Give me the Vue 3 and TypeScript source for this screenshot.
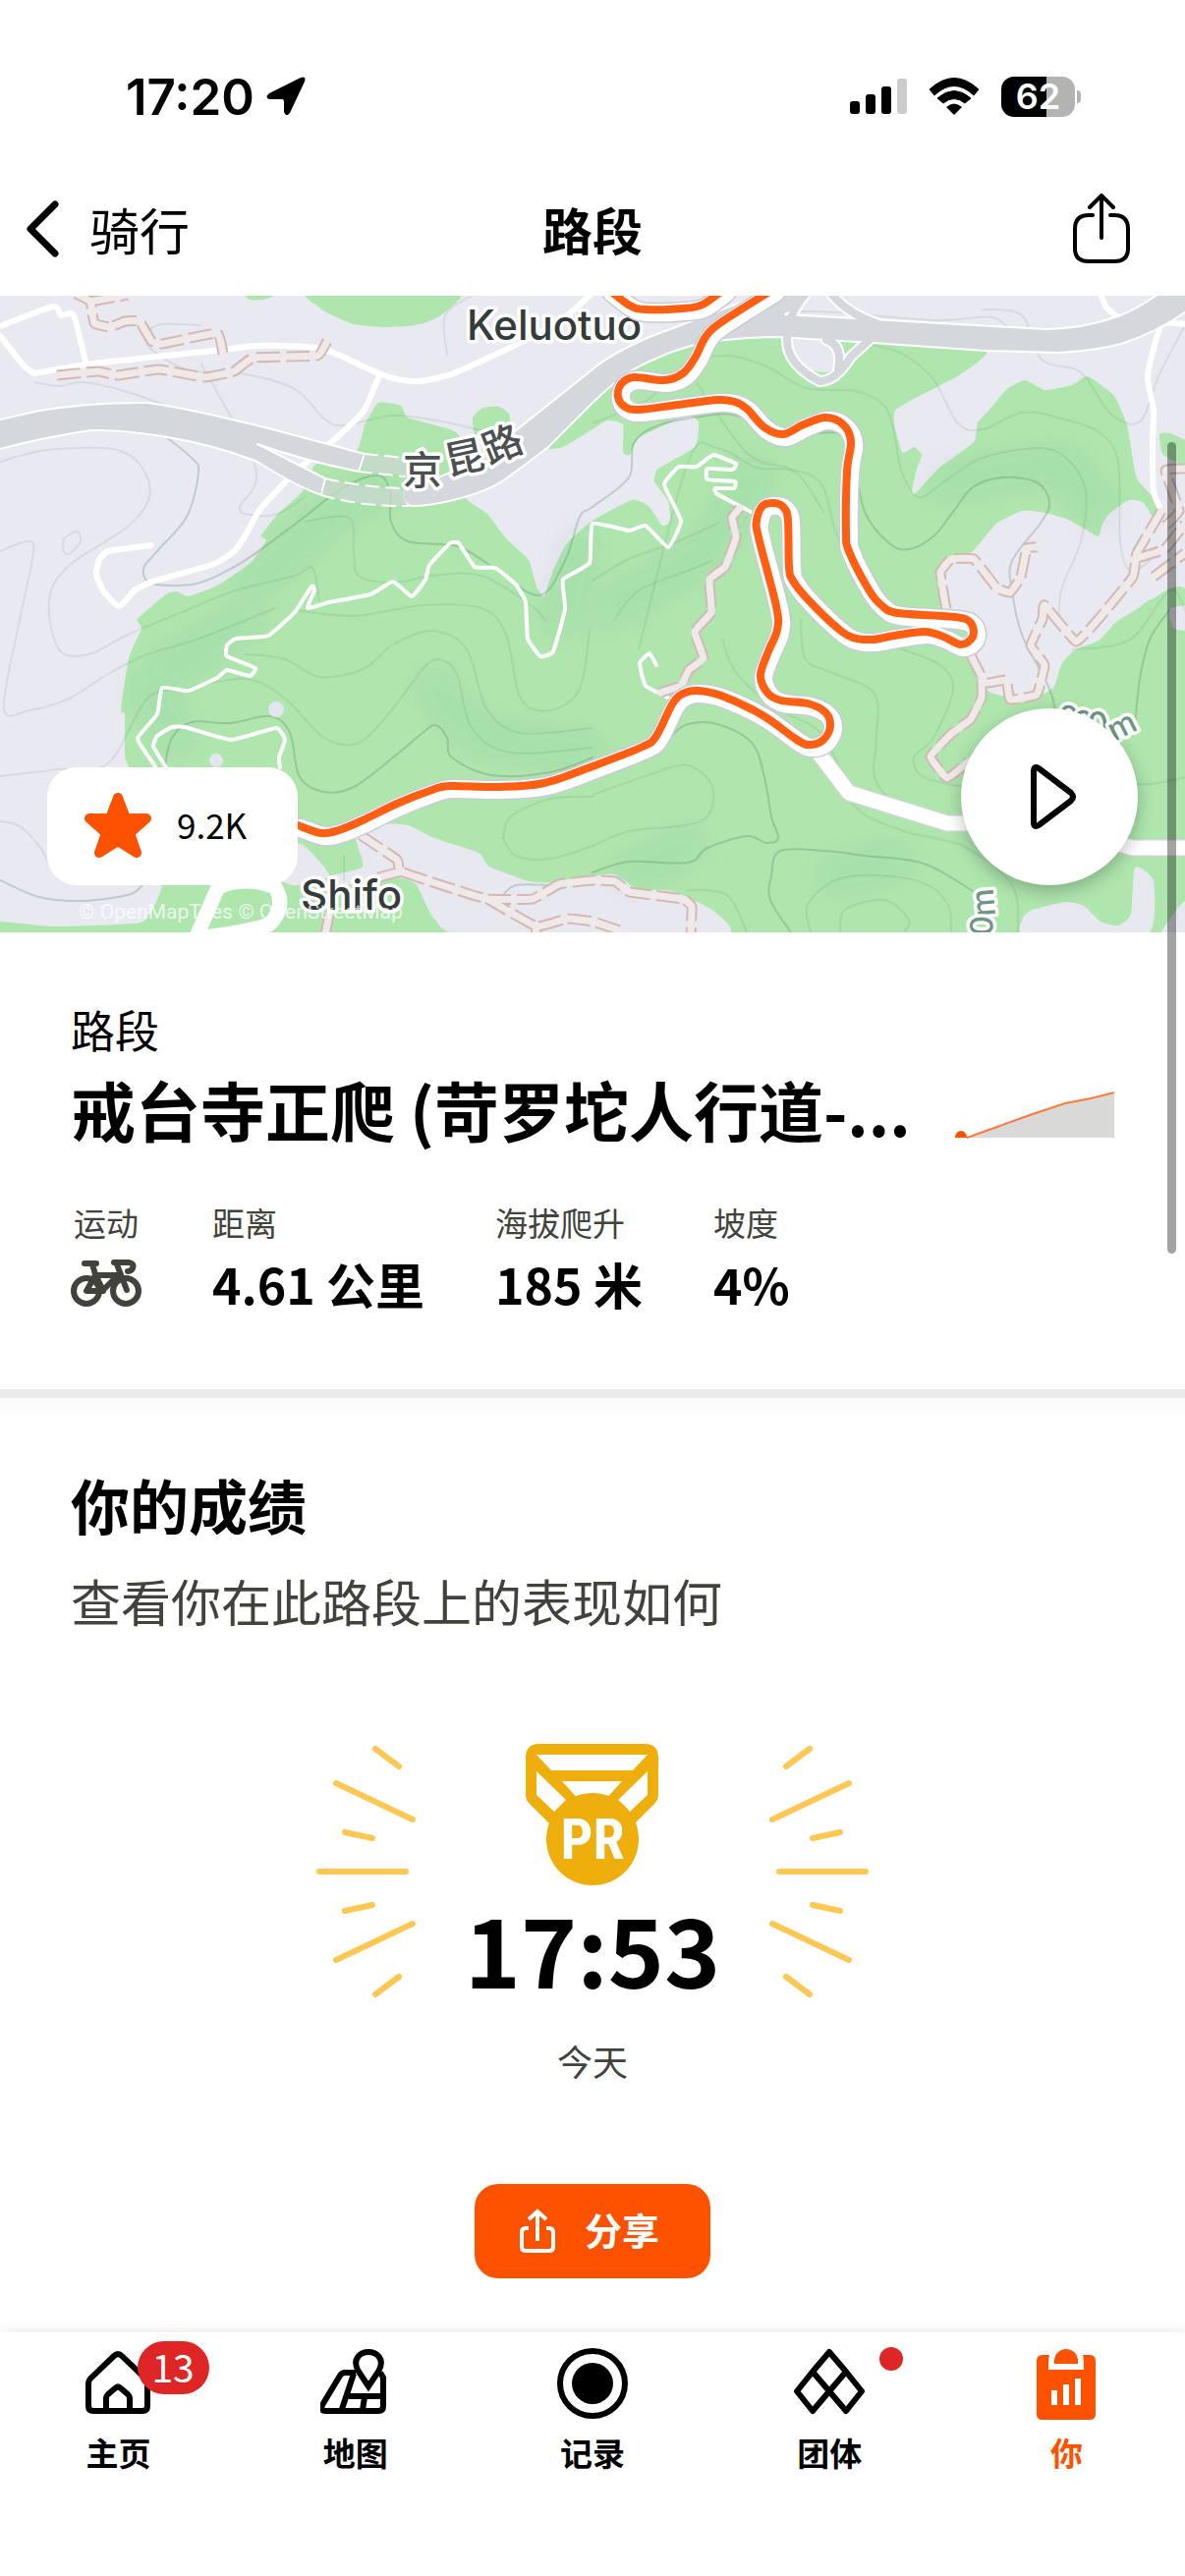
<script setup lang="ts">
type Point = [number, number]

function parse(points: string): Point[] {
  return points.split(' ').map((pair) => {
    const [x, y] = pair.split(',').map(Number)
    return [x, y] as Point
  })
}

/* Smooth curve through every point; tension 0 gives straight segments. */
function curve(points: string, closed = false, tension = 1): string {
  const p = parse(points)
  const n = p.length
  const at = (i: number): Point => (closed ? p[(i + n) % n] : p[Math.max(0, Math.min(n - 1, i))])
  let d = `M${p[0][0]} ${p[0][1]}`
  const last = closed ? n : n - 1
  for (let i = 0; i < last; i++) {
    const [a, b, c, e] = [at(i - 1), at(i), at(i + 1), at(i + 2)]
    const k = tension / 6
    d += `C${(b[0] + (c[0] - a[0]) * k).toFixed(1)} ${(b[1] + (c[1] - a[1]) * k).toFixed(1)} `
    d += `${(c[0] - (e[0] - b[0]) * k).toFixed(1)} ${(c[1] - (e[1] - b[1]) * k).toFixed(1)} ${c[0]} ${c[1]}`
  }
  return closed ? d + 'Z' : d
}

const forests: string[] = [
  '313,-4 325,12 338,20 360,29 388,32 415,31 431,28 450,19 467,-4',
  '250,-2 254,4 268,4 282,-2',
  '481,124 492,114 508,113 518,120 519,130 515,142 500,150 484,146',
  '140,329 169,304 180,301 192,306 223,294 256,271 271,249 266,244 283,222 308,199 321,172 363,157 371,132 385,109 408,112 415,124 458,136 469,146 460,186 477,209 496,222 515,247 538,269 546,296 554,306 562,282 577,252 603,229 643,208 661,215 674,234 682,229 680,209 666,189 670,176 707,154 711,129 699,122 651,144 641,162 634,159 634,131 618,127 603,136 573,154 558,154 603,109 641,77 672,62 722,47 791,42 888,46 1003,56 976,81 911,117 918,159 930,154 938,162 933,176 928,199 932,201 955,176 991,149 995,129 1007,116 1025,95 1043,86 1064,96 1091,91 1107,82 1134,102 1147,132 1157,186 1180,212 1176,229 1164,211 1149,208 1130,221 1122,232 1118,245 1107,239 1085,227 1064,221 1041,219 1014,232 989,261 964,269 955,289 963,319 990,340 1000,399 1045,412 1072,399 1080,376 1093,361 1118,351 1136,332 1157,319 1172,309 1210,309 1210,652 -4,652 -4,637 54,642 120,640 146,637 158,619 165,600 170,540 131,479 127,466 127,426 123,422 131,369 144,339',
  '1180,141 1191,140 1210,150 1210,174 1184,162'
]

const clearings: string[] = [
  '303,558 319,569 335,591 300,600 280,590',
  '362,549 388,538 415,539 442,552 487,567 498,581 538,596 565,597 603,591 626,589 649,604 684,606 726,626 734,652 477,652 442,634 423,599 400,592 350,600 335,591 369,581',
  '1040,636 1049,626 1084,617 1103,621 1120,637 1138,641 1151,629 1155,582 1174,596 1166,652 1045,652',
  '1180,652 1206,616 1212,652',
  '1190,319 1210,316 1210,340 1194,338',
  '805,46 822,43 841,45 851,56 851,72 842,78 826,76 812,66'
]

const contours: string[] = [
  '0,169 40,158 80,155 120,157 145,175 152,205 130,235 70,275 50,310 60,360 90,365 130,345 190,320 240,300 300,285 318,277 325,310',
  '0,260 28,250 34,262 20,330 4,420 30,422 70,410 110,385 150,365 200,350 280,318',
  '35,88 60,92 85,88 130,98 190,120',
  '205,30 160,30 150,50 190,75 250,80 300,95 330,125 350,132 400,122 450,128 515,142 550,135',
  '0,489 60,482 110,476 150,410 190,400 250,390 290,410 330,450 365,455 400,420 430,380 447,370 465,385 480,440 520,465 603,460',
  '205,70 260,175 244,215 255,223 283,222 310,205',
  '310,230 355,226 360,260 365,285 400,292 440,285 490,285 540,315 555,330',
  '300,320 360,326 430,315 490,318 515,345 530,410 560,422 590,400 600,340',
  '250,365 290,370 325,388 370,380 400,355 440,341 475,360 495,420 530,445 603,440',
  '0,535 20,540 40,560 60,590 100,595',
  '455,60 453,20 480,0',
  '603,130 660,105 700,70 740,61 780,72 820,94 870,97 900,112 910,140 918,180 935,205 960,190 1000,165 1060,155 1090,170 1105,200 1100,250 1080,300 1078,340',
  '710,90 760,160 800,175 835,190 850,240 860,260',
  '650,360 700,170 730,155 770,175 810,180 838,220',
  '888,50 920,60 950,85 975,130 1000,136 1040,119 1080,125 1120,140 1138,170 1140,250 1150,280 1170,270',
  '1000,14 1040,20 1060,65 1100,78 1130,120 1160,128 1180,80 1206,30',
  '770,20 830,16 950,25 1010,22 1030,40',
  '603,290 640,268 690,250 730,232',
  '625,330 650,300 700,280 724,270',
  '815,330 820,370 850,385 890,405 892,450 890,490 910,515 950,530',
  '735,350 750,385 790,420 830,440 850,470 870,520 920,545 980,560 1030,600 1036,648',
  '910,357 955,375 970,400 950,450 930,470 940,490 980,500',
  '1092,360 1150,350 1190,300 1206,320',
  '603,508 660,488 700,478 725,500 720,530 690,540 640,545 603,560',
  '512,552 520,530 560,512 603,510',
  '512,552 525,570 560,573 603,560',
  '825,648 822,620 850,595 890,590 940,598 965,620 968,648',
  '855,648 860,625 900,615 925,635 920,648',
  '1120,495 1170,497 1206,490',
  '700,605 740,610 760,648',
  '65,247 78,240 82,250 70,263 64,258 65,247',
  '350,570 350,595'
]

const indexContours: string[] = [
  '168,143 195,165 202,180 190,225 160,260 146,278 155,293 200,293 240,275 270,255 310,225 350,195 385,183 397,200 398,230 415,250 465,255 500,275 548,305 575,270 590,225 603,215 640,185 645,150 670,132 720,122 750,122 800,140 860,141 870,170 880,220 905,252 925,258 950,245 970,220 990,195 1020,185 1055,190 1068,210 1060,230 1030,270 1030,300 1040,345 1068,400 1075,430',
  '168,478 175,450 195,434 235,435 275,428 295,445 305,490 330,505 360,500 400,470 430,445 443,437 455,450 460,470 500,488 560,485 603,470',
  '683,448 700,436 730,436 765,455 778,490 785,530 792,552 780,557 760,550 720,562 700,577 640,576 603,587',
  '805,648 784,615 785,590 794,565 840,565 880,570 940,578 990,606',
  '1155,440 1160,390 1170,350 1190,320',
  '0,595 40,612 80,616 130,610 145,600',
  '510,612 525,600 560,600'
]

const streets: string[] = [
  '35,79 88,70 150,63 227,55 260,51 292,51 320,53 342,59 385,79 405,85 427,87 462,79 527,49 570,26 602,-2',
  '0,31 54,11 62,20 75,20 88,71',
  '0,41 25,72 35,79',
  '386,81 371,116 355,133 335,151 300,180 265,217 248,247 236,262 215,274 154,291',
  '154,291 137,300 121,316 105,300 98,283 101,269 108,261 115,259 154,254',
  '1206,29 1182,30 1168,81 1174,116 1173,150 1174,199 1182,219',
  '1120,-2 1126,12 1138,22'
]

const paths: string[] = [
  '158,479 140,451 160,426 165,399 192,402 221,389 231,381 254,387 260,379 231,367 231,356 240,349 273,346 300,322 317,296 320,300 313,318 335,312 377,304 400,291 419,306 433,289 437,274 458,252 467,252 483,276 504,277 525,294 535,312 537,349 550,367 563,362 575,319 573,289 600,272 603,232 640,239 657,234 680,256 693,229 676,192 691,174 709,174 726,162 749,171 745,177 720,176 720,187 748,189 747,196 728,196 730,202 766,221',
  '169,480 156,459 160,448 175,439 188,439 235,452 281,440 290,452 284,470 285,480',
  '668,376 661,364 651,374 657,397 680,409'
]

const tracks: string[] = [
  '77,-2 92,6 96,28 112,32 127,26 142,26 154,46 165,49 221,38 227,59',
  '92,6 130,-1',
  '58,81 100,77 119,81 162,75 208,83 238,77 258,63 323,61 333,46',
  '753,216 745,226 749,246 738,276 722,289 724,322 707,342 716,369 701,381 693,397 672,404',
  '963,319 957,282 968,268 991,268 1014,297 1028,302 1039,286 1045,257 1055,256',
  '1182,219 1157,262 1153,286 1118,329 1095,352 1063,315 1061,329 1049,356 1063,376 1055,406 1028,411 1024,391 1003,394 988,366',
  '999,392 999,409 988,431 968,446 947,469 964,491 986,474',
  '1206,176 1186,178 1200,219 1182,238',
  '1157,267 1185,258 1206,232',
  '1174,286 1206,262',
  '367,549 404,574 408,586 462,604 496,614 542,614 569,599 603,595 626,596 641,607 695,614 704,622 703,650',
  '408,586 378,594',
  '496,614 546,642 577,634 603,637 630,646',
  '546,642 545,650',
  '331,650 335,630'
]

const routeTop = '620,-6 641,10 657,14 695,13 715,9 736,-6'
const route =
  '786,-6 734,27 718,42 708,62 695,79 676,86 645,83 632,90 629,103 636,113 650,116 690,111 730,106 748,108 760,115 778,134 797,141 818,131 840,124 858,131 866,148 862,179 861,240 864,260 884,299 897,315 914,323 972,327 988,333 990,347 978,355 960,347 941,342 910,346 888,350 868,348 852,338 822,309 807,290 803,276 802,229 798,216 788,211 776,214 770,229 772,246 790,316 791,340 782,362 774,386 781,404 795,412 822,415 840,424 845,438 838,452 824,457 811,452 776,427 734,407 709,402 695,405 684,416 668,448 654,459 603,479 554,496 508,500 458,499 440,503 404,517 369,534 345,544 327,547 303,539'

interface Stat {
  label: string
  value: string
}

const stats: Stat[] = [
  { label: '距离', value: '4.61 公里' },
  { label: '海拔爬升', value: '185 米' },
  { label: '坡度', value: '4%' }
]

const rays: string[] = ['M60 5 84 23', 'M20 40 98 77', 'M29 90 57 96', 'M3 130H91', 'M29 170 57 164', 'M20 220 98 183', 'M60 255 84 237']

interface Tab {
  id: string
  label: string
  active?: boolean
}

const tabs: Tab[] = [
  { id: 'home', label: '主页' },
  { id: 'maps', label: '地图' },
  { id: 'record', label: '记录' },
  { id: 'groups', label: '团体' },
  { id: 'you', label: '你', active: true }
]
</script>

<template>
  <div class="app">
    <div class="status">
      <div class="clock">
        <span>17:20</span>
        <svg width="40" height="40" viewBox="0 0 40 40"><path d="M35 1 3 17Q-2 21 3 23L16 23Q18 23 18 25L18 36Q20 42 24 37L39 5Q41-1 35 1Z" /></svg>
      </div>
      <div class="signals">
        <svg width="58" height="38" viewBox="0 0 58 38">
          <rect y="24" width="10" height="13" rx="3" />
          <rect x="16" y="17" width="10" height="20" rx="3" />
          <rect x="32" y="9" width="10" height="28" rx="3" />
          <rect x="48" y="1" width="10" height="36" rx="3" fill="#ccc" />
        </svg>
        <svg width="52" height="38" viewBox="0 0 52 38">
          <path d="M1 12Q26-11 51 12L46 18Q26-1 6 18Z" stroke="#000" stroke-width="1" stroke-linejoin="round" />
          <path d="M9 21Q26 6 43 21L37 26Q26 17 15 26Z" stroke="#000" stroke-width="1" stroke-linejoin="round" />
          <path d="M18 30Q26 23 34 30L26 38Z" />
        </svg>
        <div class="battery"><span>62</span></div>
      </div>
    </div>

    <header class="header">
      <button class="back" type="button">
        <svg width="34" height="58" viewBox="0 0 34 58" fill="none" stroke="#000" stroke-width="7" stroke-linecap="round" stroke-linejoin="round"><path d="M29 4 4 29 29 54" /></svg>
        <span>骑行</span>
      </button>
      <h1>路段</h1>
      <button class="share-top" type="button" aria-label="分享路段">
        <svg width="58" height="72" viewBox="0 0 58 72" fill="none" stroke="#000" stroke-width="4" stroke-linecap="round">
          <path d="M20 22H16Q2 22 2 36V56Q2 69 16 69H42Q56 69 56 56V36Q56 22 42 22H38M29 45V3M17 14 29 2 41 14" />
        </svg>
      </button>
    </header>

    <main>
      <section class="map">
        <svg class="map-art" viewBox="0 0 1206 648" fill="none" stroke-linecap="round" stroke-linejoin="round">
          <defs>
            <filter id="relief" x="-20%" y="-20%" width="140%" height="140%"><feGaussianBlur stdDeviation="14" /></filter>
          </defs>
          <rect width="1206" height="648" fill="#e9eaf1" />
          <path v-for="f in forests" :key="f" :d="curve(f, true, 0.5)" fill="#aee6ae" />
          <path v-for="c in clearings" :key="c" :d="curve(c, true, 0.6)" fill="#e8e9f0" />
          <g stroke="#2c5a3c" stroke-opacity=".06" stroke-width="28" filter="url(#relief)">
            <path d="M260 290 340 220 390 190M170 380 250 330M570 330 590 250M620 320 720 260 770 180M440 400 490 450 600 465M640 590 700 560M850 590 910 575M180 450 150 400M960 190 1080 170 1120 220" />
          </g>
          <g stroke="#4b7562" stroke-width="2">
            <path v-for="c in contours" :key="c" :d="curve(c)" stroke-opacity=".12" />
            <path v-for="c in indexContours" :key="c" :d="curve(c)" stroke-opacity=".26" />
          </g>

          <g stroke="#fff" stroke-width="6"><path v-for="s in streets" :key="s" :d="curve(s, false, 0.6)" /></g>
          <path d="M820-2Q801 20 801 45T834 87Q851 87 866 62L888 42M841 45Q858 50 853 75M846-2Q862 18 892 28" stroke="#fff" stroke-width="12" />
          <g fill="#d4d7dc" stroke="#fff" stroke-width="2">
            <path d="M-4 127 40 117Q96 108 150 109 190 114 281 137L371 161 365 179Q310 168 262 151L331 186 327 203Q300 193 262 169 220 152 165 143 120 136 92 137 40 145-4 157Z" />
            <path d="M411 200Q410 212 419 214 440 214 469 206 495 199 511 189 535 172 558 154L603 109Q625 88 641 77 655 69 672 62 700 50 722 47 760 42 791 42L888 48 1003 56 1076 58Q1115 56 1141 49 1180 36 1210 14V-4H1182Q1160 12 1138 21 1100 34 1064 34L888 24 799 19Q835 2 800-4H782L661 42Q620 60 603 75L519 142Q470 180 425 192 412 194 411 200Z" />
          </g>
          <path d="M820-2Q801 20 801 45T834 87Q851 87 866 62L888 42M841 45Q858 50 853 75M846-2Q862 18 892 28" stroke="#d4d7dc" stroke-width="8" />
          <path d="M370 170 430 175M330 194Q370 206 414 206" stroke="#cbd8d0" stroke-opacity=".75" stroke-width="18" stroke-linecap="butt" />
          <path d="M371 161 412 165M365 179 412 184M331 186Q370 195 408 196M327 203Q370 215 416 214" stroke="#fff" stroke-width="2" stroke-dasharray="13 8" />

          <g stroke="#fff" stroke-width="4"><path v-for="p in paths" :key="p" :d="curve(p, false, 0.4)" /></g>
          <g stroke="#d3b8b3" stroke-width="11" stroke-dasharray="24 6" stroke-linecap="butt">
            <path v-for="t in tracks" :key="t" :d="curve(t, false, 0.3)" />
          </g>
          <g stroke="#f0e9e9" stroke-width="7"><path v-for="t in tracks" :key="t" :d="curve(t, false, 0.3)" /></g>

          <circle cx="281" cy="421" r="8" fill="#e3e6ee" />
          <circle cx="220" cy="473" r="7" fill="#e3e6ee" />
          <path d="M200 652 222 602Q250 590 280 602 292 622 274 640 250 648 215 652" stroke="#fff" stroke-width="15" />
          <g stroke="#d0d5d4" stroke-width="18"><path d="M832 464 864 506 964 537H1060L1153 562H1210" /></g>
          <g stroke="#fff" stroke-width="15"><path d="M832 464 864 506 964 537H1060L1153 562H1210" /></g>

          <g class="label">
            <text x="475" y="45" font-size="42">Keluotuo</text>
            <text x="306" y="625" font-size="42">Shifo</text>
            <g class="road-name" font-size="40">
              <text x="410" y="192">京</text>
              <text transform="translate(456 183) rotate(-12)">昆</text>
              <text transform="translate(498 172) rotate(-22)">路</text>
            </g>
            <g class="height-name" font-size="32">
              <text transform="translate(1072 435) rotate(24)">2</text>
              <text transform="translate(1089 443) rotate(12)">0</text>
              <text transform="translate(1109 448) rotate(-8)">0</text>
              <text transform="translate(1134 454) rotate(-27)">m</text>
              <text transform="translate(1013 631) rotate(-95)">m</text>
              <text transform="translate(1010 652) rotate(-88)">0</text>
            </g>
          </g>

          <g stroke="#c9ccd4" stroke-width="21"><path :d="curve(route)" transform="translate(3 3)" /><path :d="curve(routeTop)" transform="translate(3 3)" /></g>
          <g stroke="#fff" stroke-width="18"><path :d="curve(route)" transform="translate(3 3)" /><path :d="curve(routeTop)" transform="translate(3 3)" /></g>
          <g stroke="#ff5f12" stroke-width="8"><path :d="curve(route)" /><path :d="curve(routeTop)" /></g>
          <text class="credit" x="80" y="634">© OpenMapTiles © OpenStreetMap</text>
        </svg>

        <button class="favourite" type="button">
          <svg width="70" height="68" viewBox="0 0 70 68"><path d="M35 5 43 26H64L47 41 54 61 35 49 16 61 23 41 6 26H27Z" fill="#fc5200" stroke="#fc5200" stroke-width="10" stroke-linejoin="round" /></svg>
          <span>9.2K</span>
        </button>
        <button class="play" type="button" aria-label="播放">
          <svg width="48" height="68" viewBox="0 0 48 68"><path d="M4 8Q4 2 9 5L42 30Q46 34 42 38L9 63Q4 66 4 60Z" fill="none" stroke="#000" stroke-width="6" stroke-linejoin="round" /></svg>
        </button>
      </section>

      <section class="info">
        <p class="kind">路段</p>
        <div class="name-row">
          <h2>戒台寺正爬 (苛罗坨人行道-...</h2>
          <svg width="162" height="48" viewBox="0 0 162 48">
            <path d="M12 47 40 37 76 24 112 12 138 7 162 1V47Z" fill="#d9d9d7" />
            <path d="M12 47 40 37 76 24 112 12 138 7 162 1" fill="none" stroke="#fc7a3c" stroke-width="2" />
            <path d="M0 47A6 7 0 0 1 12 47Z" fill="#fc5200" />
          </svg>
        </div>
        <dl class="stats">
          <div class="sport">
            <dt>运动</dt>
            <dd>
              <svg class="bike" width="72" height="48" viewBox="0 0 72 48" fill="none" stroke="#42423d" stroke-width="6" stroke-linecap="round" stroke-linejoin="round">
                <circle cx="16" cy="32" r="13" /><circle cx="56" cy="32" r="13" />
                <path d="M14 4H26M44 3H59Q65 4 63 9 61 12 58 12M22 5 25 15 33 32M47 5 57 31M25 16H50M25 16 16 32H32L48 16" />
              </svg>
            </dd>
          </div>
          <div v-for="s in stats" :key="s.label">
            <dt>{{ s.label }}</dt>
            <dd>{{ s.value }}</dd>
          </div>
        </dl>
      </section>

      <section class="results">
        <h2>你的成绩</h2>
        <p class="sub">查看你在此路段上的表现如何</p>
        <div class="record">
          <svg class="rays" width="102" height="260" viewBox="0 0 102 260"><path v-for="r in rays" :key="r" :d="r" /></svg>
          <div class="best">
            <svg width="136" height="144" viewBox="0 0 136 144">
              <path d="M0 14Q0 0 14 0H121Q135 0 135 14V52Q135 57 131 61L108 84 68 90 27 84 4 61Q0 57 0 52Z" fill="#eeae0c" />
              <path d="M11 11H124L109 27H26ZM37 38H98L80 58H55ZM11 28 41 57 29 69 11 52ZM124 28 94 57 106 69 124 52Z" fill="#fff" />
              <circle cx="68" cy="97" r="47" fill="#eeae0c" />
              <text x="68" y="117" text-anchor="middle">PR</text>
            </svg>
            <strong>17:53</strong>
          </div>
          <svg class="rays flipped" width="102" height="260" viewBox="0 0 102 260"><path v-for="r in rays" :key="r" :d="r" /></svg>
        </div>
        <p class="when">今天</p>
        <button class="share" type="button">
          <svg width="36" height="46" viewBox="0 0 36 46" fill="none" stroke="#fff" stroke-width="4">
            <path d="M9 20H6Q2 20 2 24V39Q2 43 6 43H30Q34 43 34 39V24Q34 20 30 20H27M18 33V3M9 11 18 3 27 11" />
          </svg>
          <span>分享</span>
        </button>
      </section>
    </main>

    <nav class="tabs">
      <a v-for="t in tabs" :key="t.id" href="#" :class="{ active: t.active }">
        <span class="icon">
          <svg width="72" height="74" viewBox="0 0 72 74" fill="none" stroke="currentColor" stroke-width="6" stroke-linejoin="round">
            <path v-if="t.id === 'home'" d="M5 36Q5 33 7 31L31 8Q35 4 39 8L63 31Q65 33 65 36V59Q65 64 60 64H10Q5 64 5 59ZM23 64V51Q23 49 25 47L32 41Q35 38 38 41L45 47Q47 49 47 51V64" />
            <template v-else-if="t.id === 'maps'">
              <path d="M36 25H25Q22 25 20 28L2 58Q0 64 5 64H59Q64 64 64 59V30L61 25M34 26 22 62M29 49H64M45 50 43 63" />
              <path d="M49 39 39 24C31 10 42 4 49 4S67 10 59 24Z" fill="#fff" stroke-linejoin="miter" />
            </template>
            <template v-else-if="t.id === 'record'">
              <circle cx="36" cy="36" r="33" /><circle cx="36" cy="36" r="21" fill="currentColor" stroke="none" />
            </template>
            <path v-else-if="t.id === 'groups'" d="M36 4 53 24 36 44 19 24ZM19 24 36 44 19 64 3 44ZM53 24 36 44 53 64 69 44Z" />
            <g v-else fill="currentColor" stroke="none">
              <path d="M12 7H19Q18 9 18 22H54Q54 9 53 7H60Q66 7 66 13V67Q66 73 60 73H12Q6 73 6 67V13Q6 7 12 7Z" />
              <path d="M24 16V13A12 12 0 0 1 48 13V16Z" />
              <path d="M21 43H27V58H21ZM33 37H39V58H33ZM45 31H51V58H45Z" fill="#fff" />
            </g>
          </svg>
          <b v-if="t.id === 'home'" class="count">13</b>
          <i v-if="t.id === 'groups'" class="dot"></i>
        </span>
        <span>{{ t.label }}</span>
      </a>
    </nav>
    <div class="scrollbar"></div>
  </div>
</template>

<style>
body {
  margin: 0;
  background: #fff;
}
</style>

<style scoped>
.app {
  position: relative;
  display: flex;
  flex-direction: column;
  min-height: 100vh;
  background: #fff;
  color: #000;
  font-family: 'Noto Sans CJK SC', sans-serif;
}
h1, h2, p, dl, dd { margin: 0; }
button {
  box-sizing: border-box;
  padding: 0;
  border: 0;
  background: none;
  color: inherit;
  font: inherit;
}
svg { display: block; flex: none; }

.status {
  display: flex;
  justify-content: space-between;
  align-items: center;
  height: 76px;
  padding: 60px 112px 34px 128px;
  font-family: Inter, sans-serif;
  font-weight: 600;
}
.clock { display: flex; align-items: center; gap: 12px; font-size: 51px; }
.signals { display: flex; align-items: center; gap: 22px; }
.battery {
  position: relative;
  width: 75px;
  height: 41px;
  border-radius: 13px;
  background: linear-gradient(90deg, #000 62%, #b3b3b3 62%);
  color: #fff;
  font-size: 36px;
  line-height: 41px;
  text-align: center;
}
.battery::after {
  content: '';
  position: absolute;
  top: 14px;
  right: -6px;
  width: 4px;
  height: 13px;
  border-radius: 0 4px 4px 0;
  background: #b3b3b3;
}

.header {
  display: grid;
  grid-template-columns: 1fr auto 1fr;
  align-items: center;
  height: 125px;
  padding: 0 27px 6px;
  font-size: 51px;
  line-height: 72px;
}
.header h1 { font-size: 51px; font-weight: 700; }
.back { display: flex; align-items: center; gap: 30px; }
.share-top { justify-self: end; margin-right: 29px; }

.map { position: relative; }
.map-art { width: 100%; height: auto; }
.label {
  fill: #333b3b;
  stroke: #fff;
  stroke-width: 7px;
  paint-order: stroke;
  font-family: Inter, 'Noto Sans CJK SC', sans-serif;
  font-weight: 500;
}
.road-name { fill: #4c5050; }
.height-name { fill: #6f9684; }
.credit { fill: #fff; fill-opacity: 0.75; font-family: Roboto, sans-serif; font-size: 21px; }
.favourite {
  position: absolute;
  left: 48px;
  bottom: 48px;
  display: flex;
  align-items: center;
  gap: 25px;
  width: 255px;
  height: 120px;
  padding-left: 37px;
  border-radius: 30px;
  background: #fff;
  font-size: 35px;
}
.favourite span, .share span { padding-bottom: 5px; }
.play {
  position: absolute;
  right: 48px;
  bottom: 48px;
  display: grid;
  place-items: center;
  width: 180px;
  height: 180px;
  padding-left: 8px;
  border-radius: 50%;
  background: #fff;
  box-shadow: 0 6px 18px rgba(0, 0, 0, 0.25);
}

.info {
  padding: 72px 72px 78px;
  border-bottom: 9px solid #ebebea;
}
.kind { font-size: 45px; line-height: 54px; }
.name-row {
  display: flex;
  justify-content: space-between;
  align-items: flex-end;
  margin-top: 11px;
}
.name-row h2 { font-size: 66px; line-height: 84px; white-space: nowrap; }
.name-row svg { padding-bottom: 11px; }
.stats { display: flex; gap: 72px; margin-top: 54px; }
.sport { text-align: center; }
.stats dt { font-size: 33px; line-height: 40px; color: #42423d; }
.stats dd { margin-top: 12px; font-size: 50px; line-height: 60px; font-weight: 700; white-space: nowrap; }
.bike { padding-top: 6px; }

.results {
  display: flex;
  flex-direction: column;
  align-items: center;
  padding: 70px 72px 55px;
  background: linear-gradient(#fafafa, #fff 22px);
}
.results h2 { align-self: flex-start; font-size: 60px; line-height: 76px; }
.sub { align-self: flex-start; margin-top: 28px; font-size: 51px; line-height: 64px; color: #42423d; }
.record { display: flex; align-items: flex-start; margin-top: 114px; }
.rays { fill: none; stroke: #fcc752; stroke-width: 6px; stroke-linecap: round; }
.flipped { transform: scaleX(-1); }
.best { display: flex; flex-direction: column; align-items: center; width: 358px; }
.best text { fill: #fff; font-family: 'Liberation Sans Narrow', 'Roboto Condensed', 'Open Sans', sans-serif; font-size: 58px; font-weight: 700; }
.best strong { margin-top: 11px; font-size: 97px; line-height: 104px; }
.when { margin-top: 38px; font-size: 36px; line-height: 48px; color: #42423d; }
.share {
  display: flex;
  align-items: center;
  justify-content: center;
  gap: 30px;
  width: 240px;
  height: 96px;
  padding-right: 6px;
  margin-top: 102px;
  border-radius: 24px;
  background: #fc5200;
  color: #fff;
  font-size: 38px;
  font-weight: 700;
}

.tabs {
  display: flex;
  flex: 1;
  padding-top: 16px;
  background: #fff;
  box-shadow: 0 -2px 12px rgba(0, 0, 0, 0.08);
}
.tabs a {
  display: flex;
  flex: 1;
  flex-direction: column;
  align-items: center;
  gap: 12px;
  color: #000;
  font-size: 33px;
  font-weight: 700;
  line-height: 40px;
  text-decoration: none;
}
.tabs a.active { color: #fc5200; }
.icon { position: relative; }
.count {
  position: absolute;
  left: 55px;
  top: -7px;
  box-sizing: border-box;
  width: 73px;
  height: 54px;
  border-radius: 27px;
  background: #de2626;
  color: #fff;
  font-size: 39px;
  font-weight: 400;
  line-height: 50px;
  text-align: center;
}
.dot {
  position: absolute;
  left: 87px;
  top: -1px;
  width: 24px;
  height: 24px;
  border-radius: 50%;
  background: #de2626;
}
.scrollbar {
  position: absolute;
  top: 450px;
  right: 9px;
  width: 9px;
  height: 826px;
  border-radius: 5px;
  background: rgba(0, 0, 0, 0.36);
}
</style>
